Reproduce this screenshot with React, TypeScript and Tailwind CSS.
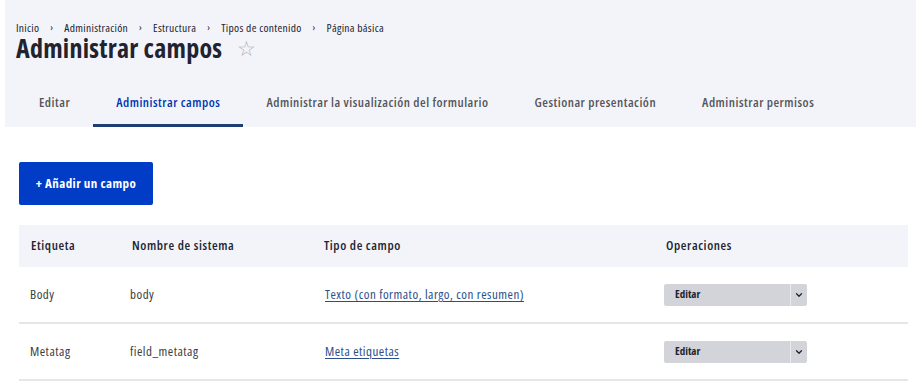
import { ChevronDown } from 'lucide-react';

const crumbs = ['Inicio', 'Administración', 'Estructura', 'Tipos de contenido', 'Página básica'];

const tabs = [
	{ label: 'Editar', active: false },
	{ label: 'Administrar campos', active: true },
	{ label: 'Administrar la visualización del formulario', active: false },
	{ label: 'Gestionar presentación', active: false },
	{ label: 'Administrar permisos', active: false },
];

const rows = [
	{ label: 'Body', machine: 'body', type: 'Texto (con formato, largo, con resumen)' },
	{ label: 'Metatag', machine: 'field_metatag', type: 'Meta etiquetas' },
];

const cols = 'grid grid-cols-[101px_192px_342px_253px]';

export default function App() {
	return (
		<div className="w-[920px] h-[391px] bg-white text-[#222330] font-['Open_Sans',sans-serif] [font-stretch:75%] overflow-hidden">
			{/* encabezado gris */}
			<div className="ml-[5px] w-[911px] h-[127px] bg-[#f3f4f9] pl-[11px]">
				<nav className="pt-[21px] flex items-center text-[11.5px] leading-[13px] tracking-[0.3px] text-[#222330]">
					{crumbs.map((c, i) => (
						<span key={c} className="flex items-center">
							{i > 0 && <span className="mx-[11px] text-[10px]">›</span>}
							{c}
						</span>
					))}
				</nav>
				<div className="flex items-center h-[28px]">
					<h1 className="text-[26px] leading-[28px] font-bold tracking-[0.25px]">Administrar campos</h1>
					<span className="ml-[15px] mt-[1px] text-[21px] leading-[21px] text-[#b0b0b6]">☆</span>
				</div>
				<div className="mt-[28px] flex h-[37px]">
					{tabs.map((t) => (
						<div
							key={t.label}
							className={`px-[23px] pb-[8px] flex items-center text-[13px] tracking-[0.5px] font-semibold border-b-[3px] ${t.active ? 'text-[#0036b1] border-[#1f3e74]' : 'text-[#55565b] border-transparent'}`}
						>
							{t.label}
						</div>
					))}
				</div>
			</div>

			<div className="pl-[19px] pt-[35px]">
				<button className="h-[43px] w-[134px] bg-[#003cc5] rounded-[2px] text-white text-[13px] tracking-[0.4px] font-bold">
					+ Añadir un campo
				</button>

				<div className="mt-[20px] w-[889px] text-[13px]">
					<div className={`${cols} h-[42px] bg-[#f3f4f9] items-center font-semibold tracking-[0.6px]`}>
						<div className="pl-[12px]">Etiqueta</div>
						<div className="pl-[12px]">Nombre de sistema</div>
						<div className="pl-[12px]">Tipo de campo</div>
						<div className="pl-[12px]">Operaciones</div>
					</div>
					{rows.map((r) => (
						<div key={r.machine} className={`${cols} h-[57px] items-center border-b-2 border-[#e6e6ea] text-[#3b3c40] tracking-[0.5px]`}>
							<div className="pl-[11px] pt-[1px]">{r.label}</div>
							<div className="pl-[10px] pt-[1px]">{r.machine}</div>
							<div className="pl-[13px] pt-[1px]">
								<a className="text-[#2b4e8a] underline underline-offset-2">{r.type}</a>
							</div>
							<div className="pl-[10px]">
								<div className="flex w-[143px] h-[22px] rounded-[2px] bg-[#d3d4d9] text-[#222330] text-[11px] font-bold tracking-normal">
									<span className="flex-1 flex items-center pl-[11px]">Editar</span>
									<span className="w-[17px] border-l border-[#e9e9ee] flex items-center justify-center">
										<ChevronDown size={10} strokeWidth={3} />
									</span>
								</div>
							</div>
						</div>
					))}
				</div>
			</div>
		</div>
	);
}
